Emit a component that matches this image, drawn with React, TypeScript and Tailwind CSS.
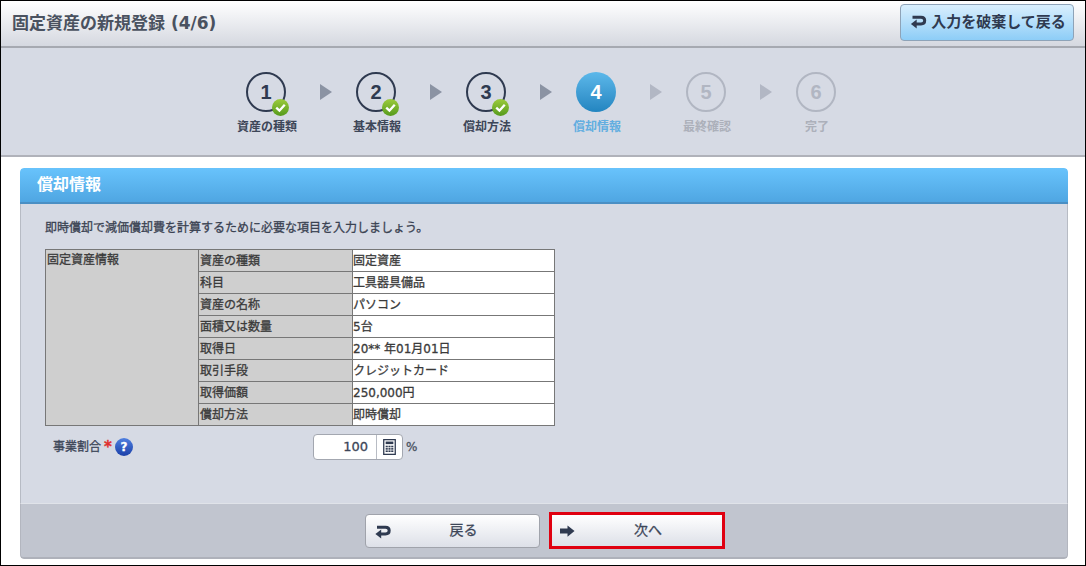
const font = { fontFamily: '"DejaVu Sans", "Noto Sans CJK JP", sans-serif' };

function ReturnIcon({ className }: { className?: string }) {
  return (
    <svg viewBox="0 0 16 14" className={className} fill="none">
      <path d="M2 2.2H10.5C12.8 2.2 14.2 3.6 14.2 5.6C14.2 7.7 12.8 9 10.5 9H5" stroke="#2f3a50" strokeWidth="3" />
      <path d="M6.2 4.6V13.6L0.4 9Z" fill="#2f3a50" />
    </svg>
  );
}

function NextIcon() {
  return (
    <svg viewBox="0 0 16 12" className="w-[15px] h-[12px]">
      <path d="M0 3.4H8V0L15.5 6L8 12V8.6H0Z" fill="#2f3a50" />
    </svg>
  );
}

function Check() {
  return (
    <svg viewBox="0 0 16 16" className="absolute left-[24px] top-[25px] w-[17px] h-[17px]">
      <defs>
        <linearGradient id="chk" x1="0" y1="0" x2="0" y2="1">
          <stop offset="0" stopColor="#9ccb3c" />
          <stop offset="1" stopColor="#559a1c" />
        </linearGradient>
      </defs>
      <circle cx="8" cy="8" r="8" fill="url(#chk)" />
      <path d="M4 8.2L7 11L12 5.4" stroke="#fff" strokeWidth="2.2" fill="none" />
    </svg>
  );
}

type Step = { n: number; label: string; state: "done" | "current" | "todo" };
const steps: Step[] = [
  { n: 1, label: "資産の種類", state: "done" },
  { n: 2, label: "基本情報", state: "done" },
  { n: 3, label: "償却方法", state: "done" },
  { n: 4, label: "償却情報", state: "current" },
  { n: 5, label: "最終確認", state: "todo" },
  { n: 6, label: "完了", state: "todo" },
];

const rows = [
  ["資産の種類", "固定資産"],
  ["科目", "工具器具備品"],
  ["資産の名称", "パソコン"],
  ["面積又は数量", "5台"],
  ["取得日", "20** 年01月01日"],
  ["取引手段", "クレジットカード"],
  ["取得価額", "250,000円"],
  ["償却方法", "即時償却"],
];

function StepItem({ s }: { s: Step }) {
  const circle =
    s.state === "done"
      ? "border-2 border-[#2f3a50] text-[#2f3a50]"
      : s.state === "current"
        ? "bg-gradient-to-b from-[#5cb8ea] to-[#2285c0] text-white"
        : "border-2 border-[#b1b6c2] text-[#b1b6c2]";
  const label =
    s.state === "done" ? "text-[#3d4658]" : s.state === "current" ? "text-[#62aee0]" : "text-[#acb0ba]";
  return (
    <div className="w-[70px] flex flex-col items-center shrink-0">
      <div className={`relative w-[40px] h-[40px] rounded-full flex items-center justify-center font-['Liberation_Sans'] text-[20px] font-bold ${circle}`}>
        {s.n}
        {s.state === "done" && <Check />}
      </div>
      <div className={`mt-[8px] pl-[2px] text-[12px] leading-[14px] font-bold whitespace-nowrap ${label}`}>{s.label}</div>
    </div>
  );
}

const cellText = "leading-[16px] [-webkit-text-stroke:0.3px]";

export default function App() {
  return (
    <div style={font} className="w-[1086px] h-[566px] bg-white border border-black border-b-0 overflow-hidden text-[#3d4658]">
      <div className="h-[47px] flex items-center justify-between bg-gradient-to-b from-white to-[#d5d8e0] border-b-[2px] border-[#a6a9b1] pl-[11px] pr-[11px]">
        <div className="text-[17px] font-bold text-[#4a5260] leading-[20px] -mt-[2px]">固定資産の新規登録 (4/6)</div>
        <button className="w-[174px] h-[37px] -mt-[3px] rounded-[4px] border border-[#8ea3b8] bg-gradient-to-b from-[#d9effd] to-[#8dcdf7] flex items-center justify-center gap-[4px] pl-[2px] text-[15px] font-bold text-[#2f3a50] whitespace-nowrap">
          <ReturnIcon className="w-[17px] h-[14px] shrink-0" />
          入力を破棄して戻る
        </button>
      </div>

      <div className="h-[109px] bg-[#d6dae4] border-b-[2px] border-[#b0b2ba] pt-[24px] pl-[230px] flex items-start">
        {steps.map((s, i) => (
          <div key={s.n} className="flex items-start">
            <StepItem s={s} />
            {i < steps.length - 1 && (
              <div className="w-[40px] h-[40px] flex items-center justify-center pl-[10px]">
                <div
                  className={`w-0 h-0 border-y-[8px] border-y-transparent border-l-[12px] ${
                    i < 3 ? "border-l-[#8b93a3]" : "border-l-[#b2b7c4]"
                  }`}
                />
              </div>
            )}
          </div>
        ))}
      </div>

      <div className="px-[19px] pt-[11px]">
        <div className="w-[1048px] h-[391px] rounded-[4px] flex flex-col overflow-hidden">
          <div className="h-[36px] shrink-0 rounded-t-[4px] bg-gradient-to-b from-[#68c3fc] to-[#4fa6e2] border-b-[2px] border-[#4a8fc4] pl-[17px] flex items-center text-[16px] font-bold text-white">
            償却情報
          </div>
          <div className="flex-1 bg-[#d6dae4] border-x border-[#b7bbc4] pt-[16px] pl-[24px] text-[12px]">
            <div className={`${cellText} text-[#3a4252]`}>即時償却で減価償却費を計算するために必要な項目を入力しましょう。</div>
            <table className="mt-[13px] w-[510px] table-fixed border-collapse border border-[#777777] text-[#3a3a3a]">
              <colgroup>
                <col className="w-[153px]" />
                <col className="w-[154px]" />
                <col />
              </colgroup>
              <tbody>
                {rows.map(([k, v], i) => (
                  <tr key={k} className="h-[22px]">
                    {i === 0 && (
                      <td rowSpan={8} className={`align-top bg-[#cfcfcf] border border-[#777777] pl-[1px] pt-[2px] ${cellText}`}>
                        固定資産情報
                      </td>
                    )}
                    <td className={`bg-[#cfcfcf] border border-[#777777] pl-[1px] ${cellText}`}>{k}</td>
                    <td className={`bg-white border border-[#777777] ${cellText}`}>{v}</td>
                  </tr>
                ))}
              </tbody>
            </table>
            <div className="mt-[7px] h-[27px] flex items-center">
              <div className={`w-[268px] pl-[8px] flex items-center text-[#3d4658] ${cellText}`}>
                事業割合
                <span className="text-[#e03030] ml-[3px] mr-[3px] text-[15px] leading-[12px] font-bold">*</span>
                <span className="w-[18px] h-[18px] rounded-full bg-gradient-to-b from-[#4f7fe0] to-[#1c3fa8] text-white text-[12px] font-bold flex items-center justify-center">?</span>
              </div>
              <div className="w-[90px] h-[26px] bg-white rounded-[4px] border border-[#a3a7b0] flex items-stretch">
                <div className="flex-1 text-right pr-[8px] text-[13px] leading-[24px] text-[#3d4658] [-webkit-text-stroke:0.3px]">100</div>
                <div className="w-[26px] border-l border-[#b8bcc4] flex items-center justify-center">
                  <svg viewBox="0 0 12 15" className="w-[13px] h-[16px]">
                    <rect x="0.6" y="0.6" width="10.8" height="13.8" fill="none" stroke="#2f3a50" strokeWidth="1.2" />
                    <rect x="2.4" y="2.4" width="7.2" height="2.4" fill="#2f3a50" />
                    {[6.3, 8.5, 10.7].map((y) =>
                      [2.4, 5, 7.6].map((x) => <rect key={`${x}-${y}`} x={x} y={y} width="2" height="1.5" fill="#2f3a50" />),
                    )}
                  </svg>
                </div>
              </div>
              <span className="ml-[3px] text-[#4a5260] [-webkit-text-stroke:0.3px]">%</span>
            </div>
          </div>
          <div className="h-[56px] shrink-0 bg-[#c1c5cf] border-t border-[#e0e3e9] border-b-[2px] border-b-[#aeb1ba] border-x border-x-[#b3b6bf] rounded-b-[4px] flex items-center justify-center gap-[9px] pl-[2px]">
            <button className="relative w-[175px] h-[34px] rounded-[4px] border border-[#a0a3ab] bg-gradient-to-b from-white to-[#dde0e8] pl-[22px] text-[14px] text-[#3d4658] [-webkit-text-stroke:0.3px] flex items-center justify-center">
              <ReturnIcon className="absolute left-[9px] top-[10px] w-[16px] h-[14px]" />
              戻る
            </button>
            <button className="relative w-[176px] h-[37px] border-[3px] border-[#e00010] bg-gradient-to-b from-white to-[#dde0e8] pl-[22px] text-[14px] text-[#3d4658] [-webkit-text-stroke:0.3px] flex items-center justify-center">
              <span className="absolute left-[8px] top-[10px]"><NextIcon /></span>
              次へ
            </button>
          </div>
        </div>
      </div>
      <div className="mt-[6px] h-[1px] bg-black" />
    </div>
  );
}
